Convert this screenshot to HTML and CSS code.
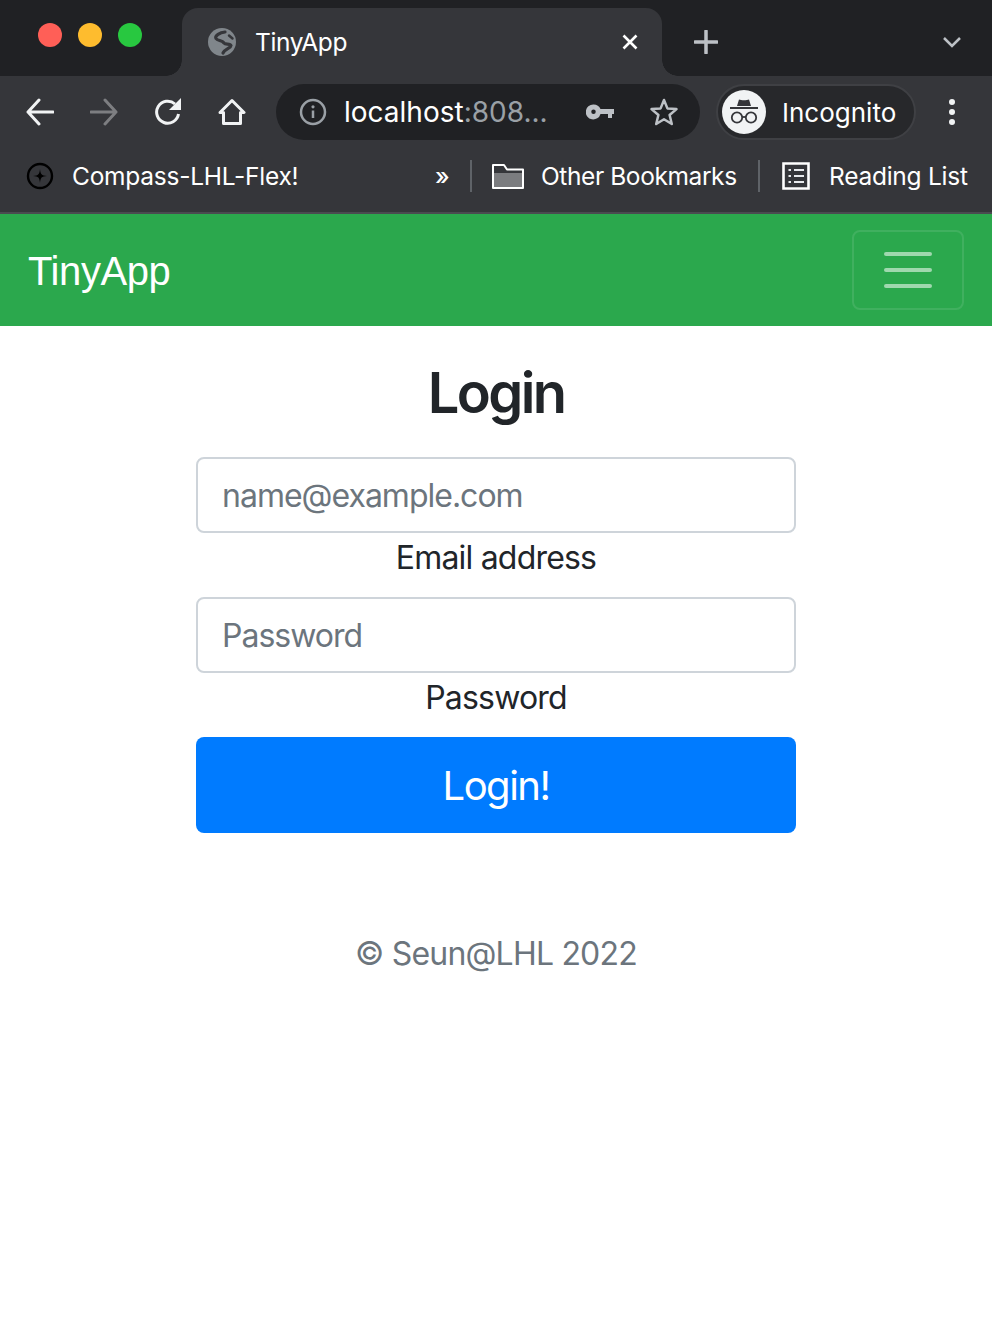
FILE: index.html
```html
<!DOCTYPE html>
<html>

<head>
    <meta charset="UTF-8" />
    <meta name="viewport" content="width=device-width, initial-scale=1" />
    <title>TinyApp</title>
    <link rel="stylesheet" href="styles.css">
</head>

<body>
    <div class="chrome">
        <div class="tabstrip">
            <div class="lights">
                <span class="light red"></span>
                <span class="light yellow"></span>
                <span class="light green"></span>
            </div>
            <div class="tab">
                <svg class="favicon" width="28" height="28" viewBox="0 0 28 28">
                    <circle cx="14" cy="14" r="14" fill="#80868b" />
                    <path d="M17 4C12 4.500 6.500 7.500 8 10.500C9.500 13 14 12 16 15C17.500 17 22 15 23 17.500C23 20 17 20.500 15 25" fill="none" stroke="#35363a" stroke-width="3.200" stroke-linecap="round" />
                    <path d="M21 7.500L24.500 10.500" stroke="#35363a" stroke-width="2.500" stroke-linecap="round" />
                </svg>
                <span class="tab-title">TinyApp</span>
                <svg class="tab-close" width="16" height="16" viewBox="0 0 16 16">
                    <path d="M1.500 1.500L14.500 14.500M14.500 1.500L1.500 14.500" stroke="#fff" stroke-width="2.600" />
                </svg>
            </div>
            <svg class="new-tab" width="24" height="24" viewBox="0 0 24 24">
                <path d="M12 1V23M1 12H23" stroke="#bdc1c6" stroke-width="3.500" stroke-linecap="round" />
            </svg>
            <svg class="tab-menu" width="20" height="12" viewBox="0 0 20 12">
                <path d="M2 2L10 10L18 2" fill="none" stroke="#bdc1c6" stroke-width="2.500" />
            </svg>
        </div>

        <div class="toolbar">
            <svg class="tool" width="28" height="28" viewBox="0 0 28 28">
                <path d="M27 14H2M13 2L2 14L13 26" fill="none" stroke="#f1f3f4" stroke-width="3" stroke-linecap="round" stroke-linejoin="round" />
            </svg>
            <svg class="tool" width="28" height="28" viewBox="0 0 28 28">
                <path d="M1 14H26M15 2L26 14L15 26" fill="none" stroke="#7d7e81" stroke-width="3" stroke-linecap="round" stroke-linejoin="round" />
            </svg>
            <svg class="tool" width="28" height="28" viewBox="0 0 28 28">
                <path d="M24.500 16A11 11 0 1 1 21 6" fill="none" stroke="#f1f3f4" stroke-width="3" />
                <path d="M27 0V12H15Z" fill="#f1f3f4" />
            </svg>
            <svg class="tool" width="28" height="28" viewBox="0 0 28 28">
                <path d="M2 14.500L14 2.500L26 14.500H22.500V25.500H5.500V14.500Z" fill="none" stroke="#f1f3f4" stroke-width="3" stroke-linejoin="round" />
            </svg>
            <div class="omnibox">
                <svg class="omni-info" width="28" height="28" viewBox="0 0 28 28">
                    <circle cx="14" cy="14" r="12" fill="none" stroke="#9aa0a6" stroke-width="2.500" />
                    <path d="M14 12.500V20" stroke="#9aa0a6" stroke-width="2.500" />
                    <circle cx="14" cy="8.800" r="1.600" fill="#9aa0a6" />
                </svg>
                <span class="url">localhost<span class="url-dim">:808...</span></span>
                <svg class="omni-key" width="28" height="16" viewBox="0 0 28 16">
                    <path fill-rule="evenodd" d="M7.500 0.500A7.500 7.500 0 0 1 14.500 5H28V10H26V14H22V10H14.500A7.500 7.500 0 1 1 7.500 0.500ZM7.500 5.500A2.200 2.200 0 1 0 7.500 10A2.200 2.200 0 1 0 7.500 5.500Z" fill="#bdc1c6" />
                </svg>
                <svg class="omni-star" width="30" height="30" viewBox="0 0 30 30">
                    <path d="M15 3L18.400 11.400L27.500 12.100L20.600 18L22.800 27L15 22.200L7.200 27L9.400 18L2.500 12.100L11.600 11.400Z" fill="none" stroke="#bdc1c6" stroke-width="2.500" stroke-linejoin="round" />
                </svg>
            </div>
            <div class="profile">
                <span class="avatar">
                    <svg width="32" height="28" viewBox="0 0 32 28">
                        <path d="M9 8L11 1.500C13 2.500 19 2.500 21 1.500L23 8Z" fill="#35363a" />
                        <path d="M2 10H30" stroke="#35363a" stroke-width="2" />
                        <circle cx="9" cy="19.500" r="5.200" fill="none" stroke="#35363a" stroke-width="1.800" />
                        <circle cx="23" cy="19.500" r="5.200" fill="none" stroke="#35363a" stroke-width="1.800" />
                        <path d="M14 19H18" stroke="#35363a" stroke-width="1.800" />
                    </svg>
                </span>
                <span class="profile-name">Incognito</span>
            </div>
            <svg class="kebab" width="8" height="28" viewBox="0 0 8 28">
                <circle cx="4" cy="4" r="3" fill="#f1f3f4" />
                <circle cx="4" cy="14" r="3" fill="#f1f3f4" />
                <circle cx="4" cy="24" r="3" fill="#f1f3f4" />
            </svg>
        </div>

        <div class="bookmarks">
            <svg class="mark-icon" width="28" height="28" viewBox="0 0 28 28">
                <circle cx="14" cy="14" r="12" fill="none" stroke="#000" stroke-width="2.400" />
                <path d="M14 7C14.600 12.600 15.400 13.400 21 14C15.400 14.600 14.600 15.400 14 21C13.400 15.400 12.600 14.600 7 14C12.600 13.400 13.400 12.600 14 7Z" fill="#000" />
            </svg>
            <span class="mark-first">Compass-LHL-Flex!</span>
            <span class="chevrons">»</span>
            <span class="mark-sep"></span>
            <svg class="mark-icon" width="32" height="25" viewBox="0 0 32 25">
                <path d="M2 9H30V23H2Z" fill="#7b7c7f" />
                <path d="M1 1V24H31V5.500H15L12 1Z" fill="none" stroke="#fff" stroke-width="2" stroke-linejoin="round" />
            </svg>
            <span class="mark-other">Other Bookmarks</span>
            <span class="mark-sep"></span>
            <svg class="mark-icon list-icon" width="28" height="28" viewBox="0 0 28 28">
                <path d="M1.500 1.500H26.500V26.500H1.500Z" fill="none" stroke="#fff" stroke-width="2.600" />
                <path d="M6.500 8H9M12 8H22M6.500 14H9M12 14H22M6.500 20H9M12 20H22" stroke="#e8eaed" stroke-width="2.200" />
            </svg>
            <span class="mark-reading">Reading List</span>
        </div>
    </div>

    <nav class="navbar">
        <a class="brand">TinyApp</a>
        <button class="toggler">
            <span class="toggler-bar"></span>
            <span class="toggler-bar"></span>
            <span class="toggler-bar"></span>
        </button>
    </nav>

    <main class="login">
        <h1>Login</h1>
        <form class="login-form">
            <input class="field" type="email" placeholder="name@example.com">
            <label class="field-label">Email address</label>
            <input class="field" type="password" placeholder="Password">
            <label class="field-label">Password</label>
            <button class="submit" type="button">Login!</button>
        </form>
        <footer class="copyright">© Seun@LHL 2022</footer>
    </main>
</body>

</html>
```
FILE: styles.css
```css
* {
    box-sizing: border-box;
}

body {
    margin: 0;
    padding: 0;
    background-color: #fff;
    font-family: Inter, "Liberation Sans", sans-serif;
    color: #212529;
}

svg {
    display: block;
    flex: none;
}

.chrome {
    background-color: #35363a;
    color: #fff;
}

/* tabs */
.tabstrip {
    display: flex;
    align-items: flex-end;
    height: 76px;
    background-color: #202124;
}

.lights {
    display: flex;
    gap: 16px;
    width: 182px;
    height: 76px;
    padding: 23px 0 0 38px;
}

.light {
    width: 24px;
    height: 24px;
    border-radius: 50%;
}

.red {
    background-color: #ff5f57;
}

.yellow {
    background-color: #febc2e;
}

.green {
    background-color: #28c840;
}

.tab {
    position: relative;
    display: flex;
    align-items: center;
    width: 480px;
    height: 68px;
    padding: 0 24px 0 26px;
    background-color: #35363a;
    border-radius: 16px 16px 0 0;
}

.tab::before,
.tab::after {
    content: "";
    position: absolute;
    bottom: 0;
    width: 16px;
    height: 16px;
}

.tab::before {
    left: -16px;
    background: radial-gradient(circle at 0 0, transparent 15.500px, #35363a 16px);
}

.tab::after {
    right: -16px;
    background: radial-gradient(circle at 100% 0, transparent 15.500px, #35363a 16px);
}

.tab-title {
    flex: 1;
    margin-left: 19px;
    font-size: 24.500px;
    letter-spacing: -0.400px;
}

.new-tab {
    margin: 0 0 22px 32px;
}

.tab-menu {
    margin: 0 30px 28px auto;
}

/* toolbar */
.toolbar {
    display: flex;
    align-items: center;
    height: 72px;
    padding: 0 36px 0 26px;
}

.tool {
    margin-right: 36px;
}

.omnibox {
    display: flex;
    align-items: center;
    width: 424px;
    height: 56px;
    margin-left: -6px;
    padding: 0 21px 0 23px;
    background-color: #202124;
    border-radius: 28px;
}

.url {
    flex: 1;
    margin-left: 17px;
    font-size: 28px;
    white-space: nowrap;
}

.url-dim {
    color: #9aa0a6;
}

.omni-star {
    margin-left: 35px;
}

.profile {
    display: flex;
    align-items: center;
    width: 200px;
    height: 56px;
    margin-left: 16px;
    padding-left: 4px;
    background-color: #27282b;
    border: 2px solid #3f4044;
    border-radius: 28px;
}

.avatar {
    display: flex;
    align-items: center;
    justify-content: center;
    width: 44px;
    height: 44px;
    background-color: #f1f3f4;
    border-radius: 50%;
}

.profile-name {
    margin-left: 16px;
    font-size: 26px;
}

.kebab {
    margin-left: auto;
}

/* bookmarks */
.bookmarks {
    display: flex;
    align-items: center;
    height: 66px;
    padding: 0 24px 8px 26px;
    border-bottom: 2px solid #4a4b50;
    font-size: 24.500px;
    letter-spacing: -0.250px;
    white-space: nowrap;
}

.mark-first {
    width: 363px;
    margin-left: 18px;
}

.chevrons {
    width: 35px;
    font-size: 24px;
    font-weight: 500;
}

.mark-sep {
    width: 2px;
    height: 32px;
    background-color: #5f6368;
}

.mark-sep + .mark-icon {
    margin-left: 20px;
}

.mark-sep + .list-icon {
    margin-left: 22px;
}

.mark-other {
    width: 195px;
    margin: 0 22px 0 17px;
    letter-spacing: -0.400px;
}

.mark-reading {
    margin-left: 19px;
}

/* navbar */
.navbar {
    display: flex;
    align-items: center;
    justify-content: space-between;
    height: 112px;
    padding: 0 28px;
    background-color: #2ba84d;
}

.brand {
    padding-top: 2px;
    color: #fff;
    font-family: "Liberation Sans", sans-serif;
    font-size: 40px;
    letter-spacing: -0.400px;
}

.toggler {
    display: flex;
    flex-direction: column;
    align-items: center;
    justify-content: center;
    gap: 12px;
    width: 112px;
    height: 80px;
    background: none;
    border: 2px solid rgba(255, 255, 255, .1);
    border-radius: 8px;
}

.toggler-bar {
    width: 48px;
    height: 4px;
    background-color: rgba(255, 255, 255, .55);
    border-radius: 2px;
}

/* login */
.login {
    display: flex;
    flex-direction: column;
    align-items: center;
    text-align: center;
}

h1 {
    margin: 32px 0 29px;
    font-size: 56px;
    font-weight: 600;
    letter-spacing: -2.600px;
    line-height: 70px;
}

.login-form {
    display: flex;
    flex-direction: column;
    width: 600px;
}

.field {
    width: 100%;
    height: 76px;
    padding: 0 24px;
    border: 2px solid #ced4da;
    border-radius: 8px;
    font-family: inherit;
    font-size: 32px;
    letter-spacing: -1px;
}

.field::placeholder {
    color: #6c757d;
}

.field-label {
    height: 64px;
    padding-top: 2px;
    font-size: 32px;
    letter-spacing: -0.800px;
    line-height: 46px;
}

.submit {
    height: 96px;
    background-color: #007bff;
    border: none;
    border-radius: 8px;
    color: #fff;
    font-family: inherit;
    font-size: 40px;
    letter-spacing: -1.500px;
}

.copyright {
    margin-top: 97px;
    color: #6c757d;
    font-size: 32px;
    letter-spacing: -0.800px;
    line-height: 48px;
}
```
